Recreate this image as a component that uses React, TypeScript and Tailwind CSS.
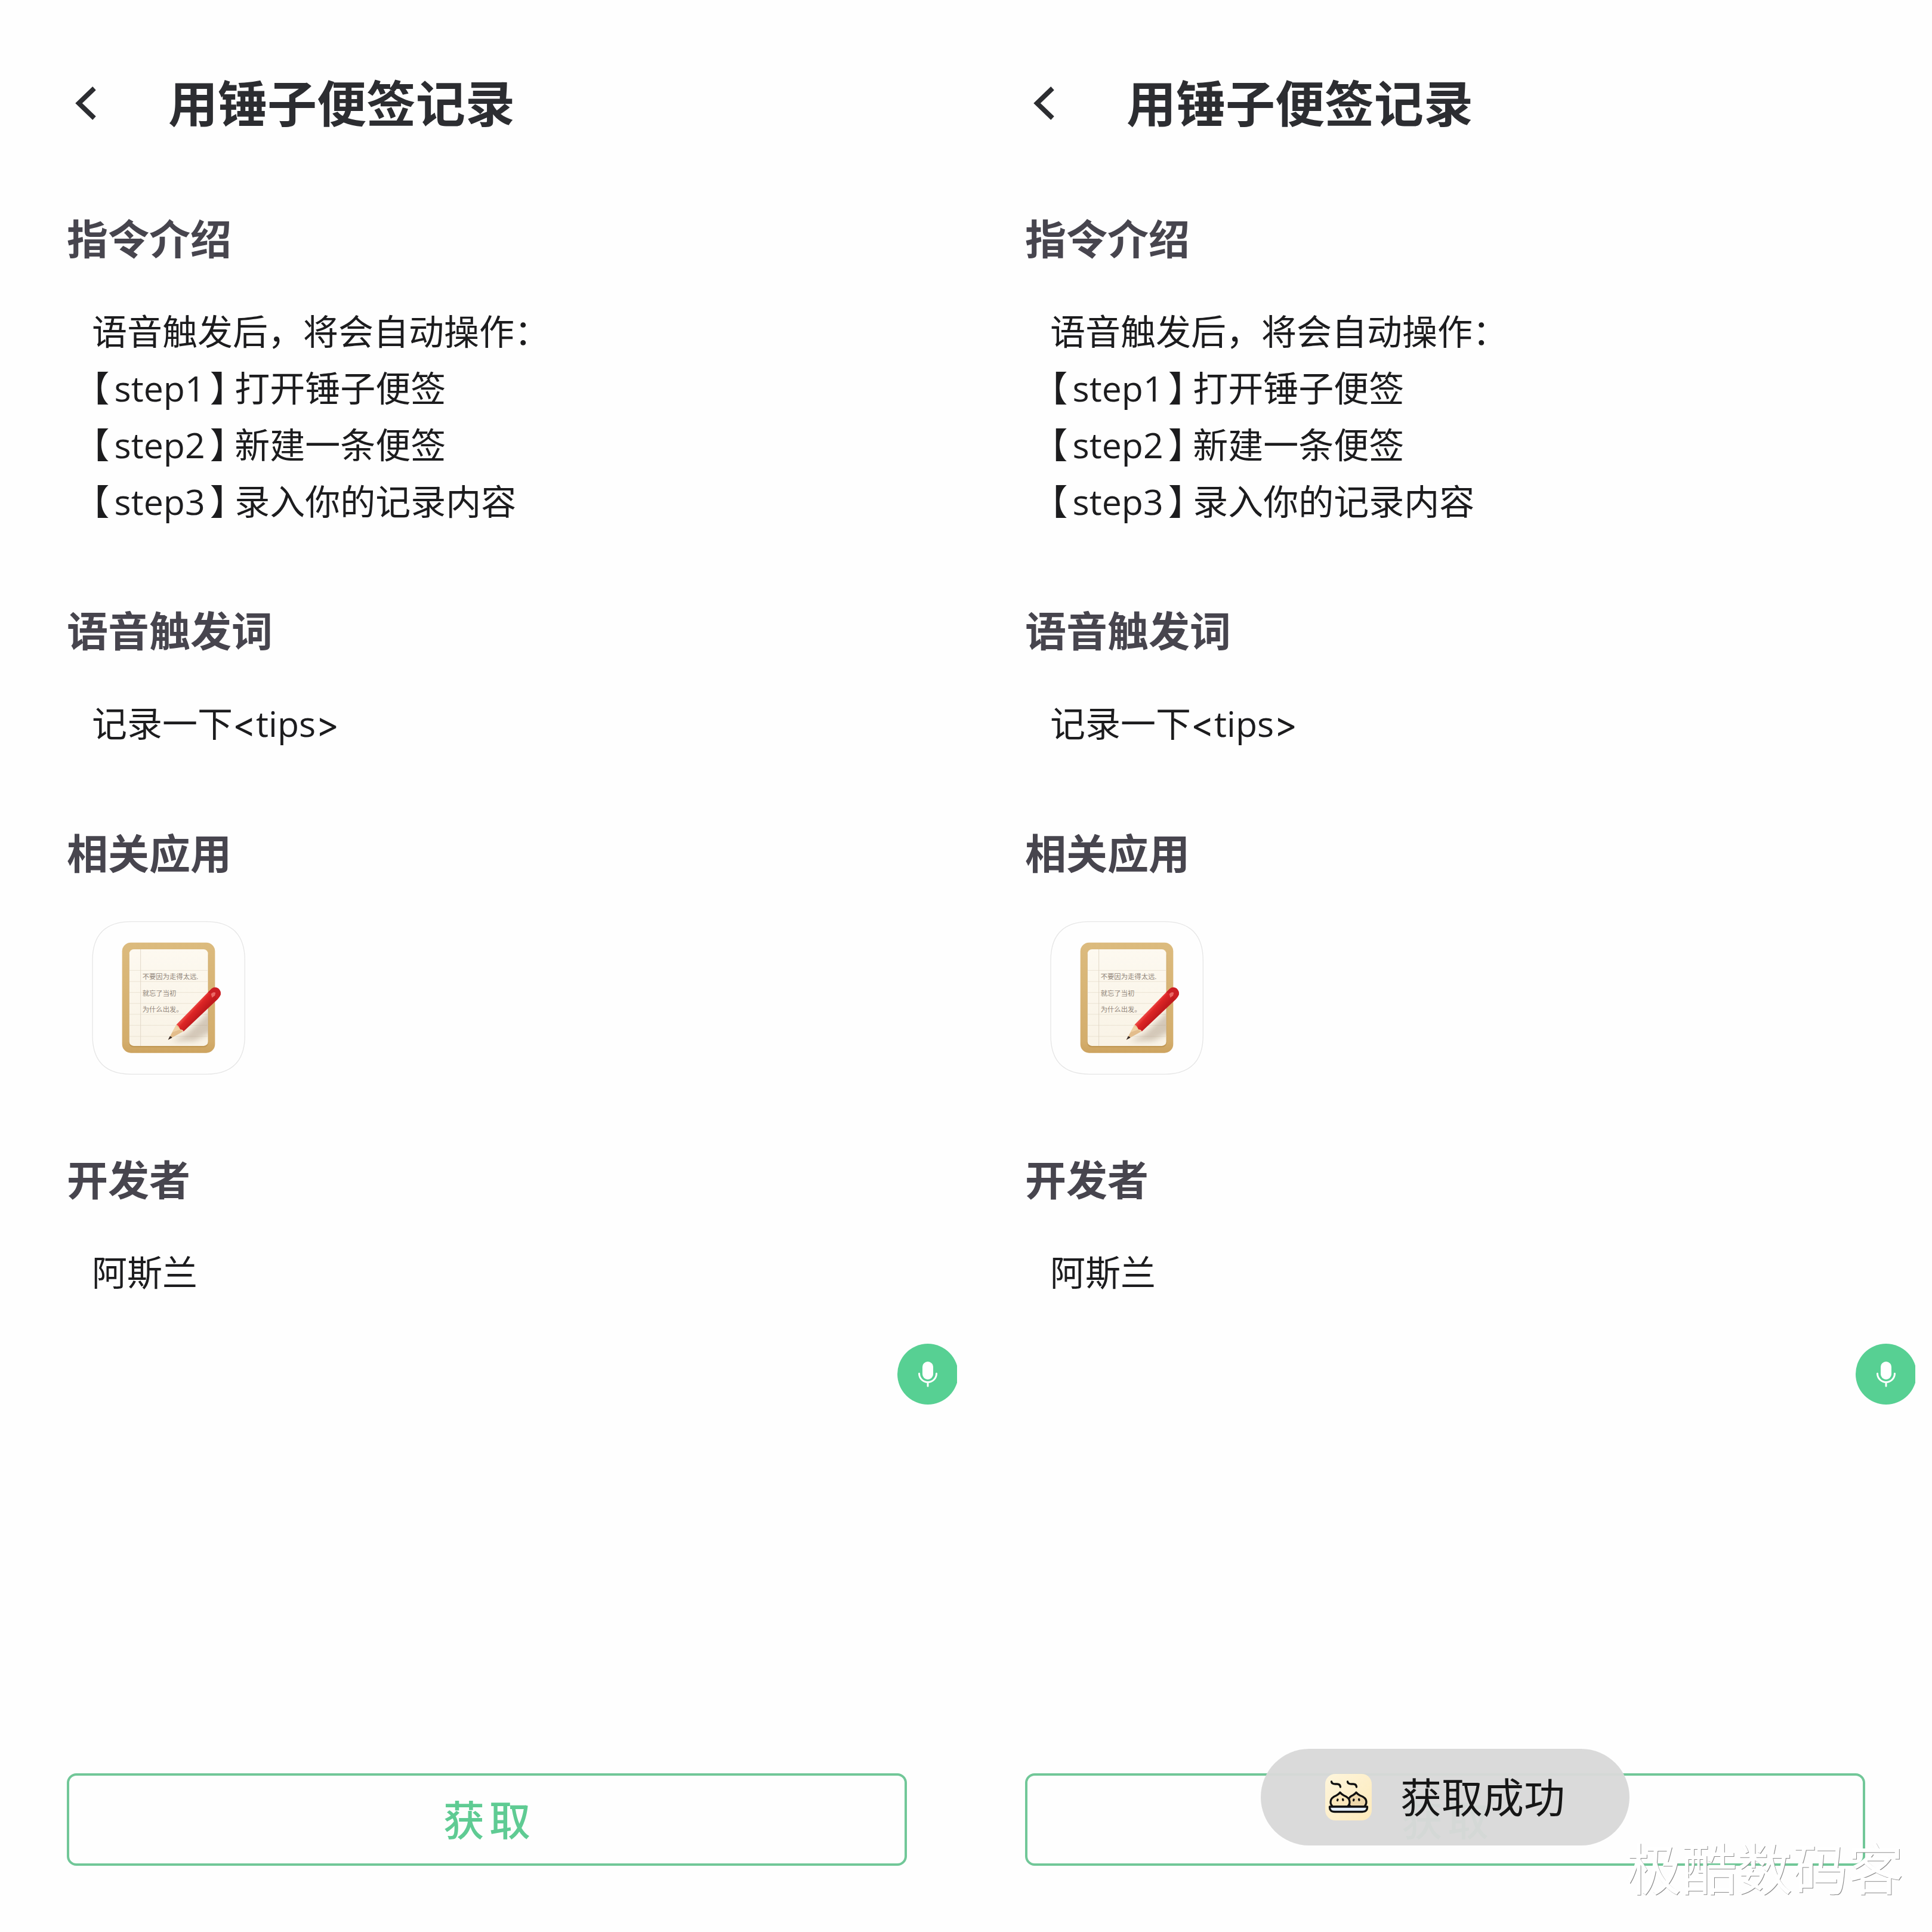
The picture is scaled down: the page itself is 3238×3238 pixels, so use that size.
import React from 'react'

type Step = {
  name: string;
  text: string;
};

const steps: Step[] = [
  { name: 'step1', text: '打开锤子便签' },
  { name: 'step2', text: '新建一条便签' },
  { name: 'step3', text: '录入你的记录内容' },
]

const NotesIcon = () => (
  <svg viewBox="72 72 771 771" className="size-[257px]" role="img" aria-label="锤子便签">
    <defs>
      <linearGradient id="board" x1="0" y1="0" x2="0" y2="1">
        <stop offset="0" stopColor="#dcbb7e" />
        <stop offset="0.9" stopColor="#d3ad6c" />
        <stop offset="1" stopColor="#cda35f" />
      </linearGradient>
      <linearGradient id="paper" x1="0" y1="0" x2="0" y2="1">
        <stop offset="0" stopColor="#fdf9f0" />
        <stop offset="1" stopColor="#f9f3e6" />
      </linearGradient>
      <linearGradient id="pencil" gradientUnits="userSpaceOnUse" x1="575" y1="485" x2="625" y2="530">
        <stop offset="0" stopColor="#c91f22" />
        <stop offset="0.25" stopColor="#ee4a45" />
        <stop offset="0.5" stopColor="#dd2526" />
        <stop offset="1" stopColor="#c21a1e" />
      </linearGradient>
      <filter id="soft" x="-20%" y="-20%" width="140%" height="140%">
        <feGaussianBlur stdDeviation="14" />
      </filter>
      <clipPath id="sheet">
        <rect x="260" y="213" width="396" height="486" rx="22" />
      </clipPath>
    </defs>
    <path
      d="M270 74H646C775 74 841 140 841 270V646C841 775 775 841 646 841H270C140 841 75 775 75 646V270C75 140 140 74 270 74Z"
      fill="#fefefe"
      stroke="#e6e6e6"
      strokeWidth="4"
    />
    <rect x="224" y="179" width="467" height="555" rx="44" fill="url(#board)" />
    <rect x="258" y="218" width="400" height="488" rx="24" fill="#b58a45" opacity="0.55" />
    <rect x="260" y="213" width="396" height="486" rx="22" fill="url(#paper)" />
    <g clipPath="url(#sheet)">
      <path d="M260 319H656M260 375H656M260 430H656M260 485H656M260 540H656M260 595H656M260 651H656" stroke="#ebe3d3" strokeWidth="3" />
      <path d="M317 213V699" stroke="#e2d8c8" strokeWidth="3" />
      <path d="M475 675L545 640L690 500V620L590 672Z" fill="#8d7660" opacity="0.35" filter="url(#soft)" />
    </g>
    <g fill="#92867a" fontSize="34" fontFamily="'Noto Sans CJK SC', sans-serif">
      <text x="326" y="363">不要因为走得太远.</text>
      <text x="326" y="447">就忘了当初</text>
      <text x="326" y="527">为什么出发。</text>
    </g>
    <path d="M497 592L455 668L531 626Z" fill="#e3bd8c" />
    <path d="M497 592L476 630L512 618L531 626L500 600Z" fill="#f0d2a6" />
    <path d="M464 650L455 668L475 658Q473 650 464 650Z" fill="#3a2d29" />
    <path d="M497 592L655 430L674 411Q690 399 706 409Q722 421 719 441Q716 451 701 467L533 626Q527 616 516 616Q510 600 497 592Z" fill="url(#pencil)" />
    <path d="M655 430L674 411Q690 399 706 409Q722 421 719 441Q716 451 701 467Q694 440 655 430Z" fill="#cb1f24" />
    <path d="M671 437Q684 424 694 432L690 446L676 456Z" fill="#f4827c" opacity="0.75" />
  </svg>
)

const BunIcon = () => (
  <svg viewBox="0 0 78 78" className="size-[78px]" fill="none" stroke="#111" strokeWidth="3.3" strokeLinecap="round" strokeLinejoin="round">
    <defs>
      <linearGradient id="bunBg" x1="0" y1="0" x2="1" y2="1">
        <stop offset="0" stopColor="#fef5dc" />
        <stop offset="1" stopColor="#fdeabb" />
      </linearGradient>
    </defs>
    <rect width="78" height="78" rx="17" fill="url(#bunBg)" stroke="none" />
    <path d="M10.5 13Q11 17 17 17H20Q25 17 25.5 22M37.5 13Q38 17 44 17H47Q52 17 52.5 22" />
    <path d="M43 55Q37 50 39 43Q41 38 46 36Q50 34 52 31Q54 34 58 36Q69 40 69 47Q69 52 65 55Z" fill="#ecd6aa" />
    <path d="M13 55Q9 52 9 47Q9 40 19 36Q23 34 25 31Q27 34 31 36Q41 40 41 47Q41 52 37 55Z" fill="#fbe7bb" />
    <path d="M21 43L20.5 44.5M29.5 42.5L30 44M48 43L47.5 44.5M56.5 42.5L57 44" />
    <path d="M7.5 55H70.5Q71 63.5 62 63.5H16Q7 63.5 7.5 55Z" fill="#e5effc" />
  </svg>
)

const MicIcon = () => (
  <svg viewBox="0 0 102 102" className="size-full" fill="none" stroke="#fff" strokeWidth="3" strokeLinecap="round">
    <rect x="42" y="30" width="18" height="30" rx="9" fill="#fff" stroke="none" />
    <path d="M36.5 50A14.5 14.5 0 0 0 65.5 50M51 65V71" />
  </svg>
)

const Section = ({ title, children }: { title: string; children: React.ReactNode }) => (
  <section className="flex flex-col gap-[60px]">
    <h2 className="text-[69px] leading-[96px] font-bold text-[#47454e]">{title}</h2>
    <div className="pl-[42px] text-[59px] leading-[95px] text-[#1c1c1e]">{children}</div>
  </section>
)

const Toast = ({ text }: { text: string }) => (
  <div
    role="status"
    className="absolute left-1/2 -top-[41px] -translate-x-1/2 flex items-center gap-12 h-[162px] px-[108px] rounded-full bg-[#d9d9d9]/96 whitespace-nowrap"
  >
    <BunIcon />
    <span className="text-[69px] leading-[96px] text-[#161616]">{text}</span>
  </div>
)

const Screen = ({ toast }: { toast?: string }) => (
  <main className="relative flex-1 min-w-0 flex flex-col overflow-hidden pl-[112px] pr-[84px] pt-[113px] pb-[111px]">
    <header className="flex items-center gap-[120px]">
      <button aria-label="返回" className="pl-[14px]">
        <svg viewBox="0 0 36 56" className="w-9 h-14" fill="none" stroke="#2c2d31" strokeWidth="8">
          <path d="M32 3L6 28L32 53" />
        </svg>
      </button>
      <h1 className="text-[83px] leading-[120px] font-bold text-[#2c2d31]">用锤子便签记录</h1>
    </header>

    <div className="mt-[119px] flex flex-col gap-[121px]">
      <Section title="指令介绍">
        <p>语音触发后，将会自动操作：</p>
        {steps.map(s => (
          <p key={s.name}>
            <span className="mr-2 [font-feature-settings:'halt']">【</span>
            {s.name}
            <span className="ml-2 mr-3 [font-feature-settings:'halt']">】</span>
            {s.text}
          </p>
        ))}
      </Section>
      <Section title="语音触发词">
        <p>
          记录一下<span className="font-['Inter']">&lt;</span>tips<span className="font-['Inter']">&gt;</span>
        </p>
      </Section>
      <Section title="相关应用">
        <div className="pt-[6px] pb-[7px]">
          <NotesIcon />
        </div>
      </Section>
      <Section title="开发者">
        <p>阿斯兰</p>
      </Section>
    </div>

    <button aria-label="语音" className="absolute top-[2252px] -right-[2px] size-[102px] rounded-full bg-[#57d093]">
      <MicIcon />
    </button>

    <div className="relative mt-auto">
      <button className="w-full h-[155px] rounded-2xl border-4 border-[#71c798] text-[69px] leading-[96px] font-medium text-[#5fcb93]">
        获<span className="ml-2">取</span>
      </button>
      {toast && <Toast text={toast} />}
    </div>
  </main>
)

const App = () => (
  <div className="relative flex gap-[2px] min-h-screen pr-7 bg-[#fefefe] font-['Open_Sans','Noto_Sans_CJK_SC',sans-serif]" lang="zh-CN">
    <Screen />
    <Screen toast="获取成功" />
    <span className="absolute right-12 bottom-[38px] text-[93px] leading-[136px] text-white [text-shadow:1px_1px_0_#8a8a8a]">
      极酷数码客
    </span>
  </div>
)

export default App
